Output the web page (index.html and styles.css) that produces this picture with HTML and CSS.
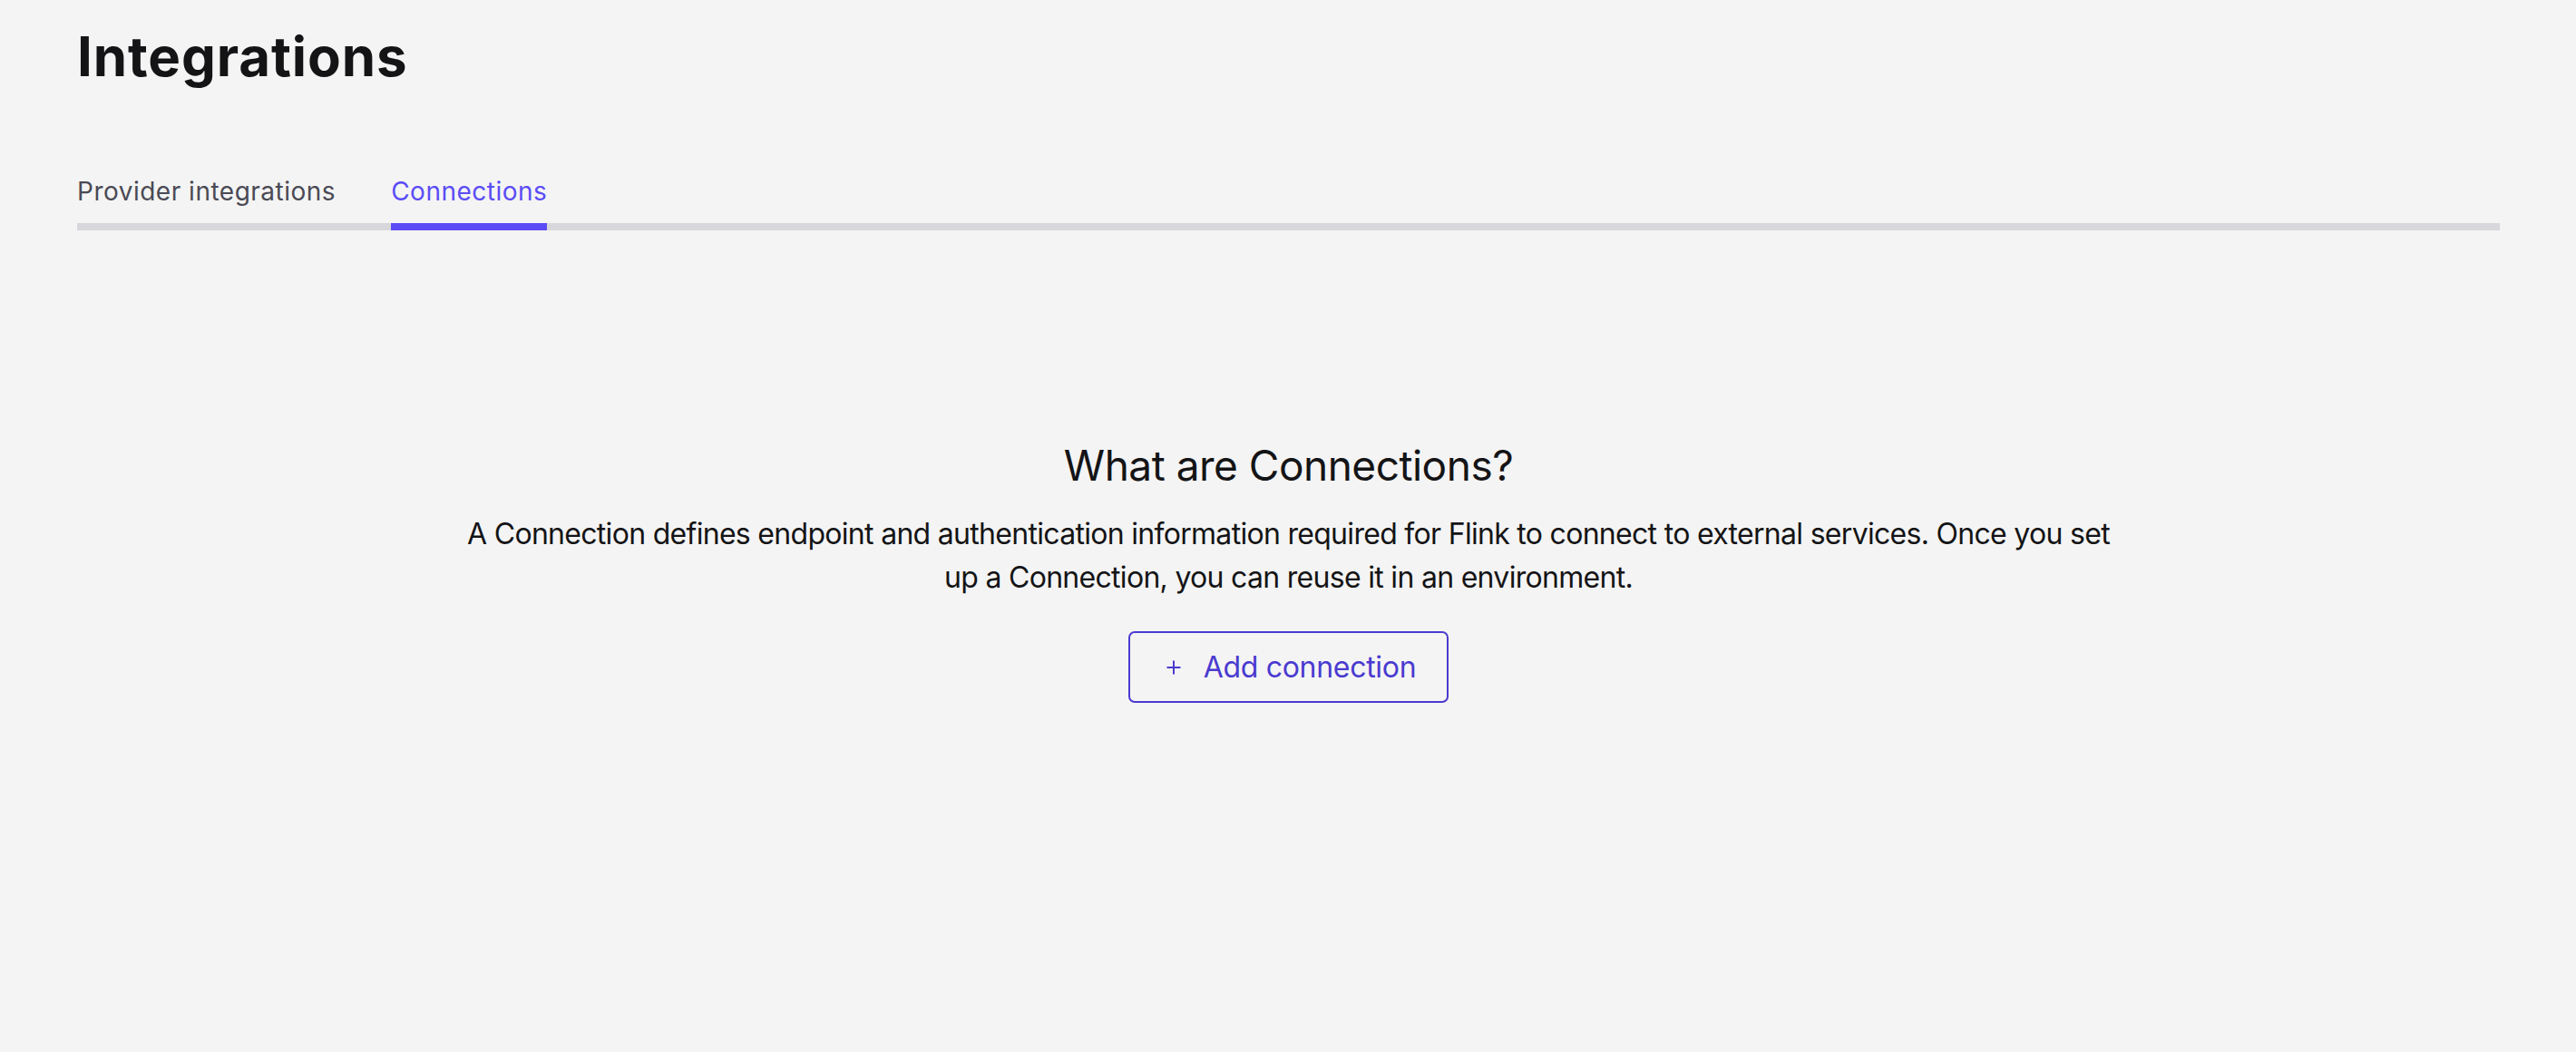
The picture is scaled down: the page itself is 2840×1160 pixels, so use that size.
FILE: index.html
```html
<!DOCTYPE html>
<html lang="en">
<head>
<meta charset="utf-8">
<title>Integrations</title>
<link rel="stylesheet" href="styles.css">
</head>
<body>
<div class="page">
  <h1 class="page-title">Integrations</h1>
  <nav class="tabs">
    <a class="tab">Provider integrations</a>
    <a class="tab tab-active">Connections</a>
  </nav>
  <section class="empty">
    <h2 class="empty-title">What are Connections?</h2>
    <p class="empty-text">A Connection defines endpoint and authentication information required for Flink to connect to external services. Once you set up a Connection, you can reuse it in an environment.</p>
    <button class="btn-outline" type="button">
      <svg class="btn-icon" width="18" height="18" viewBox="0 0 18 18" aria-hidden="true"><path d="M9 1.5v15M1.5 9h15" stroke="currentColor" stroke-width="2" fill="none"/></svg>
      <span>Add connection</span>
    </button>
  </section>
</div>
</body>
</html>
```
FILE: styles.css
```css
html, body {
  margin: 0;
  padding: 0;
  background: #f4f4f4;
}
body {
  font-family: Inter, "Noto Sans", sans-serif;
  color: #141416;
}
.page {
  padding: 26px 84px 0 85px;
}
.page-title {
  margin: 0;
  font-size: 60px;
  line-height: 72px;
  font-weight: 700;
  letter-spacing: 0.9px;
  color: #141416;
}
.tabs {
  display: flex;
  gap: 61px;
  margin-top: 95px;
  border-bottom: 8px solid #d8d8dc;
}
.tab {
  font-size: 28px;
  line-height: 36px;
  letter-spacing: 0.5px;
  padding-bottom: 17px;
  color: #4a4a55;
  margin-bottom: -8px;
  border-bottom: 8px solid transparent;
}
.tab-active {
  color: #5b4cf5;
  border-bottom-color: #5b4cf5;
}
.empty {
  display: flex;
  flex-direction: column;
  align-items: center;
  text-align: center;
  margin-top: 229px;
}
.empty-title {
  margin: 0;
  font-size: 46px;
  line-height: 60px;
  letter-spacing: -0.5px;
  font-weight: 400;
}
.empty-text {
  margin: 22px 0 0;
  max-width: 1840px;
  font-size: 32px;
  line-height: 48px;
  letter-spacing: -0.7px;
}
.btn-outline {
  margin-top: 35px;
  box-sizing: border-box;
  height: 79px;
  display: inline-flex;
  align-items: center;
  gap: 24px;
  padding: 0 34px 0 39px;
  border: 2px solid #4a3ad0;
  border-radius: 7px;
  background: transparent;
  color: #4a3ad0;
  font-family: Inter, "Noto Sans", sans-serif;
  font-size: 32px;
  letter-spacing: -0.3px;
}
.btn-icon {
  display: block;
}
```
